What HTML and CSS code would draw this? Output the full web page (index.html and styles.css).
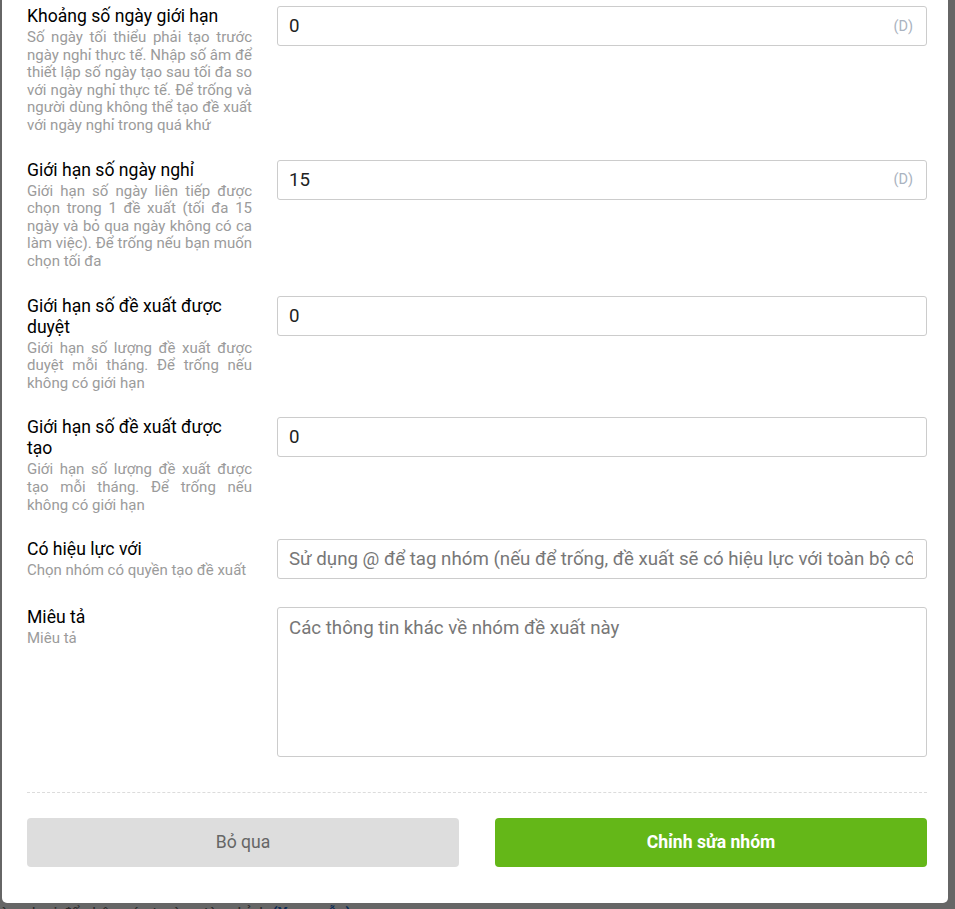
FILE: index.html
```html
<!DOCTYPE html>
<html lang="vi">
<head>
<meta charset="utf-8">
<title>Chỉnh sửa nhóm</title>
<link rel="stylesheet" href="styles.css">
</head>
<body>
<div class="modal">
  <div class="form">
    <div class="row">
      <div class="label">
        <div class="title">Khoảng số ngày giới hạn</div>
        <div class="desc">Số ngày tối thiểu phải tạo trước ngày nghỉ thực tế. Nhập số âm để thiết lập số ngày tạo sau tối đa so với ngày nghỉ thực tế. Để trống và người dùng không thể tạo đề xuất với ngày nghỉ trong quá khứ</div>
      </div>
      <div class="box"><input class="input" type="text" value="0"><span class="suffix">(D)</span></div>
    </div>
    <div class="row">
      <div class="label">
        <div class="title">Giới hạn số ngày nghỉ</div>
        <div class="desc">Giới hạn số ngày liên tiếp được chọn trong 1 đề xuất (tối đa 15 ngày và bỏ qua ngày không có ca làm việc). Để trống nếu bạn muốn chọn tối đa</div>
      </div>
      <div class="box"><input class="input" type="text" value="15"><span class="suffix">(D)</span></div>
    </div>
    <div class="row">
      <div class="label">
        <div class="title">Giới hạn số đề xuất được duyệt</div>
        <div class="desc">Giới hạn số lượng đề xuất được duyệt mỗi tháng. Để trống nếu không có giới hạn</div>
      </div>
      <div class="box"><input class="input" type="text" value="0"></div>
    </div>
    <div class="row">
      <div class="label">
        <div class="title">Giới hạn số đề xuất được tạo</div>
        <div class="desc">Giới hạn số lượng đề xuất được tạo mỗi tháng. Để trống nếu không có giới hạn</div>
      </div>
      <div class="box"><input class="input" type="text" value="0"></div>
    </div>
    <div class="row">
      <div class="label">
        <div class="title">Có hiệu lực với</div>
        <div class="desc">Chọn nhóm có quyền tạo đề xuất</div>
      </div>
      <div class="box"><input class="input" type="text" placeholder="Sử dụng @ để tag nhóm (nếu để trống, đề xuất sẽ có hiệu lực với toàn bộ công ty)"></div>
    </div>
    <div class="row row-area">
      <div class="label">
        <div class="title">Miêu tả</div>
        <div class="desc">Miêu tả</div>
      </div>
      <textarea class="textarea" placeholder="Các thông tin khác về nhóm đề xuất này"></textarea>
    </div>
  </div>
  <div class="actions">
    <button class="btn btn-cancel" type="button">Bỏ qua</button>
    <button class="btn btn-primary" type="button">Chỉnh sửa nhóm</button>
  </div>
</div>
<div class="behind">
  <div class="behind-clip"><span class="behind-text">Tải file mẫu excel theo từng loại để nhập các trường tùy chỉnh&nbsp;</span></div>
  <span class="behind-link">(Xem mẫu)</span>
</div>
</body>
</html>
```
FILE: styles.css
```css
* { box-sizing: border-box; }
html, body { margin: 0; height: 909px; overflow: hidden; }
body {
  background: #666666;
  font-family: Roboto, "Noto Sans", "Liberation Sans", sans-serif;
}
.modal {
  margin-left: 2px;
  width: 946px;
  background: #ffffff;
  border-radius: 0 0 5px 5px;
  padding: 6px 21px 36px 25px;
}
.row {
  display: grid;
  grid-template-columns: 225px 650px;
  column-gap: 25px;
  align-items: start;
  margin-bottom: 25px;
}
.row:last-child { margin-bottom: 0; }
.row-area { margin-top: 27px; }
.title {
  padding-right: 10px;
  font-size: 17.6px;
  line-height: 21px;
  color: #000000;
}
.desc {
  margin-top: 2px;
  font-size: 15px;
  line-height: 17.6px;
  color: #9b9b9b;
  text-align: justify;
}
.box {
  display: flex;
  align-items: center;
  height: 40px;
  border: 1px solid #cccccc;
  border-radius: 3px;
  padding: 0 13px 0 11px;
  background: #fff;
}
.input {
  flex: 1;
  min-width: 0;
  border: 0;
  outline: 0;
  padding: 0;
  background: transparent;
  font: 18.7px Roboto, "Noto Sans", sans-serif;
  color: #222222;
}
.input::placeholder, .textarea::placeholder { color: #777777; opacity: 1; }
.suffix {
  font-size: 14.5px;
  color: #aab3c0;
}
.textarea {
  display: block;
  width: 100%;
  height: 150px;
  border: 1px solid #cccccc;
  border-radius: 3px;
  padding: 8px 11px;
  font: 18.7px/24px Roboto, "Noto Sans", sans-serif;
  color: #222;
  resize: none;
  outline: 0;
}
.actions {
  margin-top: 35px;
  border-top: 1px dashed #dcdcdc;
  padding-top: 25px;
  display: grid;
  grid-template-columns: 1fr 1fr;
  column-gap: 36px;
}
.btn {
  height: 49px;
  border: 0;
  border-radius: 4px;
  font: 17.6px Roboto, "Noto Sans", sans-serif;
  cursor: pointer;
}
.btn-cancel { background: #dddddd; color: #666666; }
.btn-primary { background: #64b718; color: #ffffff; font-weight: 700; }
.behind {
  display: flex;
  align-items: baseline;
  margin-top: 1px;
  font-size: 16px;
  line-height: 20px;
  white-space: nowrap;
}
.behind-clip {
  width: 272px;
  display: flex;
  justify-content: flex-end;
  overflow: hidden;
}
.behind-text { color: #2a2a2a; }
.behind-link { color: #0b2a55; font-weight: 700; }
```
